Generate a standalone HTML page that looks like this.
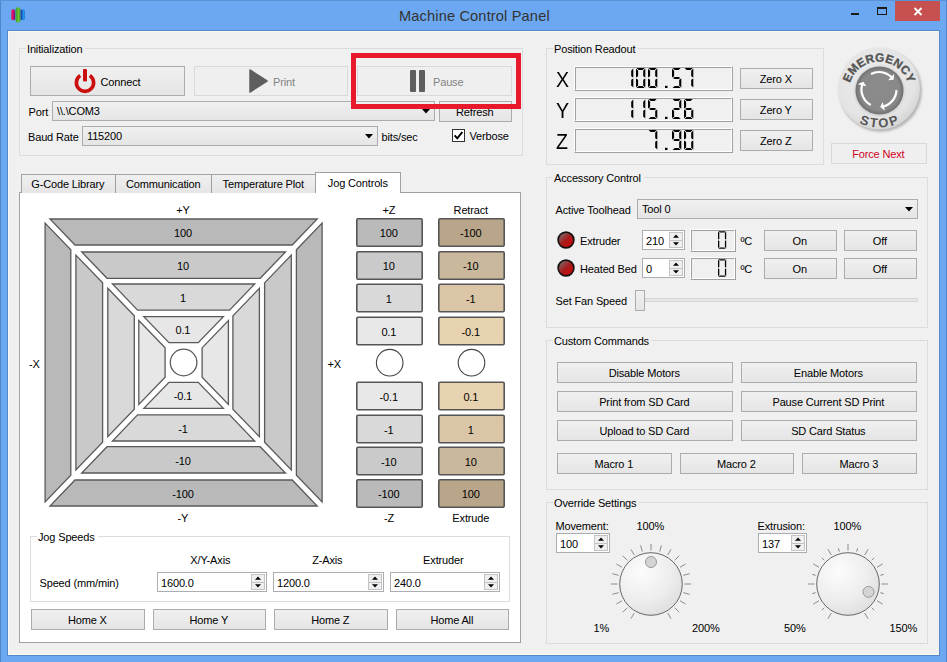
<!DOCTYPE html>
<html><head><meta charset="utf-8"><title>Machine Control Panel</title>
<style>
html,body{margin:0;padding:0;width:947px;height:662px;overflow:hidden;}
body{position:relative;font-family:"Liberation Sans", sans-serif;font-size:11px;letter-spacing:-0.15px;}
</style></head><body>
<div style="position:absolute;left:0;top:0;width:947px;height:662px;background:#6ba8f1;"></div>
<div style="position:absolute;left:0px;top:0px;width:1px;height:662px;background:#4d86c9;"></div>
<div style="position:absolute;left:0px;top:0px;width:947px;height:1px;background:#5a92d6;"></div>
<div style="position:absolute;left:946px;top:0px;width:1px;height:662px;background:#4d86c9;"></div>
<div style="position:absolute;left:7px;top:30px;width:933px;height:626px;border:1px solid #5588c8;box-sizing:border-box;background:#f0f0f0;"></div>
<div style="position:absolute;left:8px;top:31px;width:931px;height:1px;background:#fbf7f2;"></div>
<div style="position:absolute;left:8px;top:31px;width:1px;height:624px;background:#fbf7f2;"></div>
<div style="position:absolute;left:8px;top:654px;width:931px;height:1px;background:#fbf7f2;"></div>
<div style="position:absolute;left:399px;top:8.74px;line-height:14px;font-size:14.6px;color:#333;white-space:nowrap;letter-spacing:0.15px;">Machine Control Panel</div>
<svg style="position:absolute;left:10px;top:6px" width="18" height="19"><defs><linearGradient id="ic1" x1="0" x2="1"><stop offset="0" stop-color="#d0306a"/><stop offset="0.35" stop-color="#e8086a"/><stop offset="1" stop-color="#601888"/></linearGradient><linearGradient id="ic2" x1="0" x2="1"><stop offset="0" stop-color="#2a9a30"/><stop offset="0.6" stop-color="#70c038"/><stop offset="1" stop-color="#2a9a30"/></linearGradient><linearGradient id="ic3" x1="0" x2="1"><stop offset="0" stop-color="#281898"/><stop offset="0.6" stop-color="#1aa0ee"/><stop offset="1" stop-color="#1a70d0"/></linearGradient></defs><rect x="1.2" y="3.3" width="4" height="11" rx="2" fill="url(#ic1)"/><rect x="5.5" y="1.2" width="5" height="15.3" rx="2.5" fill="url(#ic2)"/><rect x="10.8" y="3.3" width="4" height="11" rx="2" fill="url(#ic3)"/></svg>
<div style="position:absolute;left:851px;top:13px;width:8px;height:2px;background:#1a1a1a;"></div>
<div style="position:absolute;left:877px;top:7px;width:10px;height:8px;border:1.5px solid #1a1a1a;border-top-width:2px;box-sizing:border-box;"></div>
<div style="position:absolute;left:895px;top:1px;width:45px;height:20px;background:#c75050;"></div>
<svg style="position:absolute;left:912px;top:6px" width="12" height="11"><path d="M2.5,2 L9.5,9 M9.5,2 L2.5,9" stroke="#fff" stroke-width="1.9"/></svg>
<div style="position:absolute;left:19px;top:48px;width:504px;height:108px;border:1px solid #dcdcdc;box-sizing:border-box;"></div>
<div style="position:absolute;left:30px;top:66px;width:155px;height:30px;border:1px solid #acacac;background:linear-gradient(#f0f0f0,#e5e5e5);box-sizing:border-box;"></div>
<svg style="position:absolute;left:73px;top:68px" width="24" height="26"><path d="M7.2,7.6 A8.6,8.6 0 1 0 16.8,7.6" fill="none" stroke="#cc1010" stroke-width="3.6" stroke-linecap="butt"/><rect x="10" y="1" width="4" height="12.5" rx="1" fill="#cc1010"/></svg>
<div style="position:absolute;left:100.5px;top:75.19px;line-height:14px;font-size:11px;color:#000;white-space:nowrap;">Connect</div>
<div style="position:absolute;left:194px;top:66px;width:154px;height:30px;border:1px solid #d9d9d9;background:#efefef;box-sizing:border-box;"></div>
<svg style="position:absolute;left:249px;top:69px" width="20" height="24"><polygon points="1,1 18,12 1,23" fill="#5e5e5e" stroke="#5e5e5e" stroke-width="1.5" stroke-linejoin="round"/></svg>
<div style="position:absolute;left:273px;top:75.19px;line-height:14px;font-size:11px;color:#838383;white-space:nowrap;">Print</div>
<div style="position:absolute;left:357px;top:66px;width:155px;height:30px;border:1px solid #d9d9d9;background:#efefef;box-sizing:border-box;"></div>
<div style="position:absolute;left:410px;top:70px;width:6px;height:22px;background:#5e5e5e;border-radius:1px;"></div>
<div style="position:absolute;left:419px;top:70px;width:6px;height:22px;background:#5e5e5e;border-radius:1px;"></div>
<div style="position:absolute;left:433px;top:75.19px;line-height:14px;font-size:11px;color:#838383;white-space:nowrap;">Pause</div>
<div style="position:absolute;left:28.5px;top:105.19px;line-height:14px;font-size:11px;color:#000;white-space:nowrap;">Port</div>
<div style="position:absolute;left:52px;top:101px;width:383px;height:20px;border:1px solid #acacac;background:linear-gradient(#f0f0f0,#e5e5e5);box-sizing:border-box;"></div>
<div style="position:absolute;left:57px;top:104.19px;line-height:14px;font-size:11px;color:#000;white-space:nowrap;">\\.\COM3</div>
<svg style="position:absolute;left:422px;top:109.0px" width="8" height="5"><polygon points="0,0 8,0 4,4.5" fill="#000"/></svg>
<div style="position:absolute;left:439px;top:101px;width:73px;height:21px;border:1px solid #acacac;background:linear-gradient(#f0f0f0,#e5e5e5);box-sizing:border-box;"></div>
<div style="position:absolute;left:274.80px;width:400px;text-align:center;top:105.19px;line-height:14px;font-size:11px;color:#000;white-space:nowrap;">Refresh</div>
<div style="position:absolute;left:28px;top:130.19px;line-height:14px;font-size:11px;color:#000;white-space:nowrap;">Baud Rate</div>
<div style="position:absolute;left:82px;top:126px;width:296px;height:20px;border:1px solid #acacac;background:linear-gradient(#f0f0f0,#e5e5e5);box-sizing:border-box;"></div>
<div style="position:absolute;left:87px;top:129.19px;line-height:14px;font-size:11px;color:#000;white-space:nowrap;">115200</div>
<svg style="position:absolute;left:365px;top:134.0px" width="8" height="5"><polygon points="0,0 8,0 4,4.5" fill="#000"/></svg>
<div style="position:absolute;left:381.5px;top:130.19px;line-height:14px;font-size:11px;color:#000;white-space:nowrap;">bits/sec</div>
<div style="position:absolute;left:452px;top:129px;width:13px;height:13px;border:1px solid #333;background:#fff;box-sizing:border-box;"></div>
<svg style="position:absolute;left:452px;top:129px" width="13" height="13"><path d="M2.6,6.3 L5.3,9.3 L10.3,3" fill="none" stroke="#000" stroke-width="2"/></svg>
<div style="position:absolute;left:469.5px;top:129.19px;line-height:14px;font-size:11px;color:#000;white-space:nowrap;">Verbose</div>
<div style="position:absolute;left:546px;top:48px;width:278px;height:117px;border:1px solid #dcdcdc;box-sizing:border-box;"></div>
<div style="position:absolute;left:556px;top:72.92px;line-height:14px;font-size:21.3px;color:#000;white-space:nowrap;transform:scaleX(0.92);transform-origin:0 0;">X</div>
<div style="position:absolute;left:574px;top:66px;width:159px;height:25px;border-top:1px solid #fff;border-left:1px solid #fff;border-bottom:1px solid #a0a0a0;border-right:1px solid #a0a0a0;box-sizing:border-box;"></div>
<div style="position:absolute;left:575px;top:67px;width:157px;height:23px;border-top:1px solid #a0a0a0;border-left:1px solid #a0a0a0;border-bottom:1px solid #fff;border-right:1px solid #fff;box-sizing:border-box;"></div>
<svg style="position:absolute;left:574px;top:66px" width="159" height="25"><g fill="#000"><polygon points="110.60,2.00 118.70,2.00 116.60,4.10 112.70,4.10"/><polygon points="119.30,2.60 119.30,11.40 117.20,10.35 117.20,4.70"/><polygon points="119.30,12.60 119.30,21.40 117.20,19.30 117.20,13.65"/><polygon points="98.60,2.00 106.70,2.00 104.60,4.10 100.70,4.10"/><polygon points="98.00,2.60 100.10,4.70 100.10,10.35 98.00,11.40"/><polygon points="98.90,12.00 100.70,10.95 104.60,10.95 106.40,12.00 104.60,13.05 100.70,13.05"/><polygon points="107.30,12.60 107.30,21.40 105.20,19.30 105.20,13.65"/><polygon points="100.70,19.90 104.60,19.90 106.70,22.00 98.60,22.00"/><rect x="91.00" y="19.80" width="2.5" height="2.2"/><polygon points="74.60,2.00 82.70,2.00 80.60,4.10 76.70,4.10"/><polygon points="83.30,2.60 83.30,11.40 81.20,10.35 81.20,4.70"/><polygon points="83.30,12.60 83.30,21.40 81.20,19.30 81.20,13.65"/><polygon points="76.70,19.90 80.60,19.90 82.70,22.00 74.60,22.00"/><polygon points="74.00,12.60 76.10,13.65 76.10,19.30 74.00,21.40"/><polygon points="74.00,2.60 76.10,4.70 76.10,10.35 74.00,11.40"/><polygon points="62.60,2.00 70.70,2.00 68.60,4.10 64.70,4.10"/><polygon points="71.30,2.60 71.30,11.40 69.20,10.35 69.20,4.70"/><polygon points="71.30,12.60 71.30,21.40 69.20,19.30 69.20,13.65"/><polygon points="64.70,19.90 68.60,19.90 70.70,22.00 62.60,22.00"/><polygon points="62.00,12.60 64.10,13.65 64.10,19.30 62.00,21.40"/><polygon points="62.00,2.60 64.10,4.70 64.10,10.35 62.00,11.40"/><polygon points="59.30,2.60 59.30,11.40 57.20,10.35 57.20,4.70"/><polygon points="59.30,12.60 59.30,21.40 57.20,19.30 57.20,13.65"/></g></svg>
<div style="position:absolute;left:740px;top:68px;width:73px;height:21px;border:1px solid #acacac;background:linear-gradient(#f0f0f0,#e5e5e5);box-sizing:border-box;"></div>
<div style="position:absolute;left:575.80px;width:400px;text-align:center;top:71.69px;line-height:14px;font-size:11px;color:#000;white-space:nowrap;">Zero X</div>
<div style="position:absolute;left:556px;top:103.92px;line-height:14px;font-size:21.3px;color:#000;white-space:nowrap;transform:scaleX(0.92);transform-origin:0 0;">Y</div>
<div style="position:absolute;left:574px;top:97px;width:159px;height:25px;border-top:1px solid #fff;border-left:1px solid #fff;border-bottom:1px solid #a0a0a0;border-right:1px solid #a0a0a0;box-sizing:border-box;"></div>
<div style="position:absolute;left:575px;top:98px;width:157px;height:23px;border-top:1px solid #a0a0a0;border-left:1px solid #a0a0a0;border-bottom:1px solid #fff;border-right:1px solid #fff;box-sizing:border-box;"></div>
<svg style="position:absolute;left:574px;top:97px" width="159" height="25"><g fill="#000"><polygon points="110.60,2.00 118.70,2.00 116.60,4.10 112.70,4.10"/><polygon points="110.00,2.60 112.10,4.70 112.10,10.35 110.00,11.40"/><polygon points="110.90,12.00 112.70,10.95 116.60,10.95 118.40,12.00 116.60,13.05 112.70,13.05"/><polygon points="110.00,12.60 112.10,13.65 112.10,19.30 110.00,21.40"/><polygon points="112.70,19.90 116.60,19.90 118.70,22.00 110.60,22.00"/><polygon points="119.30,12.60 119.30,21.40 117.20,19.30 117.20,13.65"/><polygon points="98.60,2.00 106.70,2.00 104.60,4.10 100.70,4.10"/><polygon points="107.30,2.60 107.30,11.40 105.20,10.35 105.20,4.70"/><polygon points="98.90,12.00 100.70,10.95 104.60,10.95 106.40,12.00 104.60,13.05 100.70,13.05"/><polygon points="98.00,12.60 100.10,13.65 100.10,19.30 98.00,21.40"/><polygon points="100.70,19.90 104.60,19.90 106.70,22.00 98.60,22.00"/><rect x="91.00" y="19.80" width="2.5" height="2.2"/><polygon points="74.60,2.00 82.70,2.00 80.60,4.10 76.70,4.10"/><polygon points="74.00,2.60 76.10,4.70 76.10,10.35 74.00,11.40"/><polygon points="74.90,12.00 76.70,10.95 80.60,10.95 82.40,12.00 80.60,13.05 76.70,13.05"/><polygon points="83.30,12.60 83.30,21.40 81.20,19.30 81.20,13.65"/><polygon points="76.70,19.90 80.60,19.90 82.70,22.00 74.60,22.00"/><polygon points="71.30,2.60 71.30,11.40 69.20,10.35 69.20,4.70"/><polygon points="71.30,12.60 71.30,21.40 69.20,19.30 69.20,13.65"/><polygon points="59.30,2.60 59.30,11.40 57.20,10.35 57.20,4.70"/><polygon points="59.30,12.60 59.30,21.40 57.20,19.30 57.20,13.65"/></g></svg>
<div style="position:absolute;left:740px;top:99px;width:73px;height:21px;border:1px solid #acacac;background:linear-gradient(#f0f0f0,#e5e5e5);box-sizing:border-box;"></div>
<div style="position:absolute;left:575.80px;width:400px;text-align:center;top:102.69px;line-height:14px;font-size:11px;color:#000;white-space:nowrap;">Zero Y</div>
<div style="position:absolute;left:556px;top:134.92px;line-height:14px;font-size:21.3px;color:#000;white-space:nowrap;transform:scaleX(0.92);transform-origin:0 0;">Z</div>
<div style="position:absolute;left:574px;top:128px;width:159px;height:25px;border-top:1px solid #fff;border-left:1px solid #fff;border-bottom:1px solid #a0a0a0;border-right:1px solid #a0a0a0;box-sizing:border-box;"></div>
<div style="position:absolute;left:575px;top:129px;width:157px;height:23px;border-top:1px solid #a0a0a0;border-left:1px solid #a0a0a0;border-bottom:1px solid #fff;border-right:1px solid #fff;box-sizing:border-box;"></div>
<svg style="position:absolute;left:574px;top:128px" width="159" height="25"><g fill="#000"><polygon points="110.60,2.00 118.70,2.00 116.60,4.10 112.70,4.10"/><polygon points="119.30,2.60 119.30,11.40 117.20,10.35 117.20,4.70"/><polygon points="119.30,12.60 119.30,21.40 117.20,19.30 117.20,13.65"/><polygon points="112.70,19.90 116.60,19.90 118.70,22.00 110.60,22.00"/><polygon points="110.00,12.60 112.10,13.65 112.10,19.30 110.00,21.40"/><polygon points="110.00,2.60 112.10,4.70 112.10,10.35 110.00,11.40"/><polygon points="98.60,2.00 106.70,2.00 104.60,4.10 100.70,4.10"/><polygon points="107.30,2.60 107.30,11.40 105.20,10.35 105.20,4.70"/><polygon points="107.30,12.60 107.30,21.40 105.20,19.30 105.20,13.65"/><polygon points="100.70,19.90 104.60,19.90 106.70,22.00 98.60,22.00"/><polygon points="98.00,2.60 100.10,4.70 100.10,10.35 98.00,11.40"/><polygon points="98.90,12.00 100.70,10.95 104.60,10.95 106.40,12.00 104.60,13.05 100.70,13.05"/><rect x="91.00" y="19.80" width="2.5" height="2.2"/><polygon points="74.60,2.00 82.70,2.00 80.60,4.10 76.70,4.10"/><polygon points="83.30,2.60 83.30,11.40 81.20,10.35 81.20,4.70"/><polygon points="83.30,12.60 83.30,21.40 81.20,19.30 81.20,13.65"/></g></svg>
<div style="position:absolute;left:740px;top:130px;width:73px;height:21px;border:1px solid #acacac;background:linear-gradient(#f0f0f0,#e5e5e5);box-sizing:border-box;"></div>
<div style="position:absolute;left:575.80px;width:400px;text-align:center;top:133.69px;line-height:14px;font-size:11px;color:#000;white-space:nowrap;">Zero Z</div>
<svg style="position:absolute;left:830px;top:40px" width="100" height="100" viewBox="830 40 100 100">
<defs>
<radialGradient id="ring" cx="0.45" cy="0.4" r="0.6"><stop offset="0" stop-color="#ececec"/><stop offset="0.8" stop-color="#e4e4e4"/><stop offset="1" stop-color="#d6d6d6"/></radialGradient>
<radialGradient id="btn" cx="0.5" cy="0.5" r="0.5"><stop offset="0" stop-color="#8c8c8c"/><stop offset="0.82" stop-color="#898989"/><stop offset="1" stop-color="#707070"/></radialGradient>
<filter id="sh" x="-20%" y="-20%" width="140%" height="140%"><feGaussianBlur stdDeviation="1.2"/></filter>
<path id="arcTop" d="M 848.7,92 A 30.3,30.3 0 0 1 909.3,92"/>
<path id="arcBot" d="M 833,81.5 A 46,46 0 0 0 925,81.5"/>
</defs>
<circle cx="880.5" cy="90.5" r="41.5" fill="#b8b8b8" filter="url(#sh)"/>
<circle cx="879" cy="88.5" r="41" fill="url(#ring)"/>
<circle cx="879.5" cy="91.0" r="25" fill="#d0d0d0" filter="url(#sh)"/>
<circle cx="879.5" cy="90.5" r="24" fill="url(#btn)"/>
<text font-family="Liberation Sans" font-weight="bold" font-size="11.8" fill="#555" stroke="#555" stroke-width="0.35"><textPath href="#arcTop" startOffset="50%" text-anchor="middle" textLength="77" lengthAdjust="spacing">EMERGENCY</textPath></text>
<text font-family="Liberation Sans" font-weight="bold" font-size="13" fill="#555"><textPath href="#arcBot" startOffset="50%" text-anchor="middle" textLength="41" lengthAdjust="spacing">STOP</textPath></text>
<path d="M 871.06,73.91 A 17.5,17.5 0 0 1 891.59,77.34" fill="none" stroke="#fff" stroke-width="2.2"/><polygon points="893.51,79.71 894.28,73.67 888.03,80.15" fill="#fff"/><path d="M 896.49,90.11 A 17.5,17.5 0 0 1 883.23,106.48" fill="none" stroke="#fff" stroke-width="2.2"/><polygon points="880.22,106.96 885.06,110.65 882.58,102.00" fill="#fff"/><path d="M 870.78,104.95 A 17.5,17.5 0 0 1 862.18,84.68" fill="none" stroke="#fff" stroke-width="2.2"/><polygon points="863.27,81.83 857.65,84.18 866.39,86.36" fill="#fff"/>
</svg>
<div style="position:absolute;left:831px;top:143px;width:96px;height:21px;border:1px solid #d9d9d9;background:#efefef;box-sizing:border-box;"></div>
<div style="position:absolute;left:678.30px;width:400px;text-align:center;top:146.69px;line-height:14px;font-size:11px;color:#d0021b;white-space:nowrap;">Force Next</div>
<div style="position:absolute;left:546px;top:177px;width:382px;height:151px;border:1px solid #dcdcdc;box-sizing:border-box;"></div>
<div style="position:absolute;left:555.5px;top:203.19px;line-height:14px;font-size:11px;color:#000;white-space:nowrap;">Active Toolhead</div>
<div style="position:absolute;left:637px;top:199px;width:281px;height:20px;border:1px solid #acacac;background:linear-gradient(#f0f0f0,#e5e5e5);box-sizing:border-box;"></div>
<div style="position:absolute;left:642px;top:202.19px;line-height:14px;font-size:11px;color:#000;white-space:nowrap;">Tool 0</div>
<svg style="position:absolute;left:905px;top:207.0px" width="8" height="5"><polygon points="0,0 8,0 4,4.5" fill="#000"/></svg>
<svg style="position:absolute;left:555.7px;top:230.0px" width="20" height="20"><defs><linearGradient id="led565.7240" x1="0.15" y1="0.1" x2="0.85" y2="0.9"><stop offset="0" stop-color="#7a6a6a"/><stop offset="0.5" stop-color="#a81c1c"/><stop offset="1" stop-color="#cc0808"/></linearGradient></defs><circle cx="10" cy="10" r="7.9" fill="url(#led565.7240)" stroke="#111" stroke-width="1.6"/></svg>
<div style="position:absolute;left:580px;top:233.69px;line-height:14px;font-size:11px;color:#000;white-space:nowrap;">Extruder</div>
<div style="position:absolute;left:642px;top:230px;width:43px;height:20px;border:1px solid #abadb3;background:#fff;box-sizing:border-box;"></div>
<div style="position:absolute;left:646px;top:233.99px;line-height:14px;font-size:11px;color:#000;white-space:nowrap;">210</div>
<div style="position:absolute;left:669px;top:232px;width:14px;height:16px;border:1px solid #c4c4c4;background:#efefef;box-sizing:border-box;"></div>
<div style="position:absolute;left:670px;top:239.5px;width:12px;height:1px;background:#c4c4c4;"></div>
<svg style="position:absolute;left:669px;top:232px" width="14" height="16"><polygon points="4.0,5.8 10.0,5.8 7.0,2.5999999999999996" fill="#000"/><polygon points="4.0,10.2 10.0,10.2 7.0,13.4" fill="#000"/></svg>
<div style="position:absolute;left:690px;top:229.0px;width:46px;height:23px;border-top:1px solid #fff;border-left:1px solid #fff;border-bottom:1px solid #a0a0a0;border-right:1px solid #a0a0a0;box-sizing:border-box;"></div>
<div style="position:absolute;left:691px;top:230.0px;width:44px;height:21px;border-top:1px solid #a0a0a0;border-left:1px solid #a0a0a0;border-bottom:1px solid #fff;border-right:1px solid #fff;box-sizing:border-box;"></div>
<svg style="position:absolute;left:690px;top:229.0px" width="46" height="23"><g fill="#000"><polygon points="28.40,2.20 35.80,2.20 34.50,3.50 29.70,3.50"/><polygon points="36.20,2.60 36.20,10.55 34.90,9.90 34.90,3.90"/><polygon points="36.20,11.35 36.20,19.30 34.90,18.00 34.90,12.00"/><polygon points="29.70,18.40 34.50,18.40 35.80,19.70 28.40,19.70"/><polygon points="28.00,11.35 29.30,12.00 29.30,18.00 28.00,19.30"/><polygon points="28.00,2.60 29.30,3.90 29.30,9.90 28.00,10.55"/></g></svg>
<div style="position:absolute;left:740.5px;top:233.69px;line-height:14px;font-size:11px;color:#000;white-space:nowrap;">&ordm;C</div>
<div style="position:absolute;left:764px;top:230px;width:73px;height:21px;border:1px solid #acacac;background:linear-gradient(#f0f0f0,#e5e5e5);box-sizing:border-box;"></div>
<div style="position:absolute;left:599.80px;width:400px;text-align:center;top:233.69px;line-height:14px;font-size:11px;color:#000;white-space:nowrap;">On</div>
<div style="position:absolute;left:844px;top:230px;width:73px;height:21px;border:1px solid #acacac;background:linear-gradient(#f0f0f0,#e5e5e5);box-sizing:border-box;"></div>
<div style="position:absolute;left:679.80px;width:400px;text-align:center;top:233.69px;line-height:14px;font-size:11px;color:#000;white-space:nowrap;">Off</div>
<svg style="position:absolute;left:555.7px;top:258.0px" width="20" height="20"><defs><linearGradient id="led565.7268" x1="0.15" y1="0.1" x2="0.85" y2="0.9"><stop offset="0" stop-color="#7a6a6a"/><stop offset="0.5" stop-color="#a81c1c"/><stop offset="1" stop-color="#cc0808"/></linearGradient></defs><circle cx="10" cy="10" r="7.9" fill="url(#led565.7268)" stroke="#111" stroke-width="1.6"/></svg>
<div style="position:absolute;left:580px;top:261.69px;line-height:14px;font-size:11px;color:#000;white-space:nowrap;">Heated Bed</div>
<div style="position:absolute;left:642px;top:258px;width:43px;height:20px;border:1px solid #abadb3;background:#fff;box-sizing:border-box;"></div>
<div style="position:absolute;left:646px;top:261.99px;line-height:14px;font-size:11px;color:#000;white-space:nowrap;">0</div>
<div style="position:absolute;left:669px;top:260px;width:14px;height:16px;border:1px solid #c4c4c4;background:#efefef;box-sizing:border-box;"></div>
<div style="position:absolute;left:670px;top:267.5px;width:12px;height:1px;background:#c4c4c4;"></div>
<svg style="position:absolute;left:669px;top:260px" width="14" height="16"><polygon points="4.0,5.8 10.0,5.8 7.0,2.5999999999999996" fill="#000"/><polygon points="4.0,10.2 10.0,10.2 7.0,13.4" fill="#000"/></svg>
<div style="position:absolute;left:690px;top:257.0px;width:46px;height:23px;border-top:1px solid #fff;border-left:1px solid #fff;border-bottom:1px solid #a0a0a0;border-right:1px solid #a0a0a0;box-sizing:border-box;"></div>
<div style="position:absolute;left:691px;top:258.0px;width:44px;height:21px;border-top:1px solid #a0a0a0;border-left:1px solid #a0a0a0;border-bottom:1px solid #fff;border-right:1px solid #fff;box-sizing:border-box;"></div>
<svg style="position:absolute;left:690px;top:257.0px" width="46" height="23"><g fill="#000"><polygon points="28.40,2.20 35.80,2.20 34.50,3.50 29.70,3.50"/><polygon points="36.20,2.60 36.20,10.55 34.90,9.90 34.90,3.90"/><polygon points="36.20,11.35 36.20,19.30 34.90,18.00 34.90,12.00"/><polygon points="29.70,18.40 34.50,18.40 35.80,19.70 28.40,19.70"/><polygon points="28.00,11.35 29.30,12.00 29.30,18.00 28.00,19.30"/><polygon points="28.00,2.60 29.30,3.90 29.30,9.90 28.00,10.55"/></g></svg>
<div style="position:absolute;left:740.5px;top:261.69px;line-height:14px;font-size:11px;color:#000;white-space:nowrap;">&ordm;C</div>
<div style="position:absolute;left:764px;top:258px;width:73px;height:21px;border:1px solid #acacac;background:linear-gradient(#f0f0f0,#e5e5e5);box-sizing:border-box;"></div>
<div style="position:absolute;left:599.80px;width:400px;text-align:center;top:261.69px;line-height:14px;font-size:11px;color:#000;white-space:nowrap;">On</div>
<div style="position:absolute;left:844px;top:258px;width:73px;height:21px;border:1px solid #acacac;background:linear-gradient(#f0f0f0,#e5e5e5);box-sizing:border-box;"></div>
<div style="position:absolute;left:679.80px;width:400px;text-align:center;top:261.69px;line-height:14px;font-size:11px;color:#000;white-space:nowrap;">Off</div>
<div style="position:absolute;left:555.5px;top:294.19px;line-height:14px;font-size:11px;color:#000;white-space:nowrap;">Set Fan Speed</div>
<div style="position:absolute;left:645px;top:298px;width:273px;height:4px;border:1px solid #d6d6d6;background:#e7e7e7;box-sizing:border-box;"></div>
<div style="position:absolute;left:635px;top:290px;width:10px;height:21px;border:1px solid #acacac;background:linear-gradient(#f0f0f0,#e5e5e5);box-sizing:border-box;"></div>
<div style="position:absolute;left:546px;top:340px;width:382px;height:150px;border:1px solid #dcdcdc;box-sizing:border-box;"></div>
<div style="position:absolute;left:557px;top:362px;width:176px;height:21px;border:1px solid #acacac;background:linear-gradient(#f0f0f0,#e5e5e5);box-sizing:border-box;"></div>
<div style="position:absolute;left:444.30px;width:400px;text-align:center;top:365.69px;line-height:14px;font-size:11px;color:#000;white-space:nowrap;">Disable Motors</div>
<div style="position:absolute;left:741px;top:362px;width:176px;height:21px;border:1px solid #acacac;background:linear-gradient(#f0f0f0,#e5e5e5);box-sizing:border-box;"></div>
<div style="position:absolute;left:628.30px;width:400px;text-align:center;top:365.69px;line-height:14px;font-size:11px;color:#000;white-space:nowrap;">Enable Motors</div>
<div style="position:absolute;left:557px;top:391px;width:176px;height:21px;border:1px solid #acacac;background:linear-gradient(#f0f0f0,#e5e5e5);box-sizing:border-box;"></div>
<div style="position:absolute;left:444.30px;width:400px;text-align:center;top:394.69px;line-height:14px;font-size:11px;color:#000;white-space:nowrap;">Print from SD Card</div>
<div style="position:absolute;left:741px;top:391px;width:176px;height:21px;border:1px solid #acacac;background:linear-gradient(#f0f0f0,#e5e5e5);box-sizing:border-box;"></div>
<div style="position:absolute;left:628.30px;width:400px;text-align:center;top:394.69px;line-height:14px;font-size:11px;color:#000;white-space:nowrap;">Pause Current SD Print</div>
<div style="position:absolute;left:557px;top:420px;width:176px;height:21px;border:1px solid #acacac;background:linear-gradient(#f0f0f0,#e5e5e5);box-sizing:border-box;"></div>
<div style="position:absolute;left:444.30px;width:400px;text-align:center;top:423.69px;line-height:14px;font-size:11px;color:#000;white-space:nowrap;">Upload to SD Card</div>
<div style="position:absolute;left:741px;top:420px;width:176px;height:21px;border:1px solid #acacac;background:linear-gradient(#f0f0f0,#e5e5e5);box-sizing:border-box;"></div>
<div style="position:absolute;left:628.30px;width:400px;text-align:center;top:423.69px;line-height:14px;font-size:11px;color:#000;white-space:nowrap;">SD Card Status</div>
<div style="position:absolute;left:557px;top:453px;width:115px;height:21px;border:1px solid #acacac;background:linear-gradient(#f0f0f0,#e5e5e5);box-sizing:border-box;"></div>
<div style="position:absolute;left:413.80px;width:400px;text-align:center;top:456.69px;line-height:14px;font-size:11px;color:#000;white-space:nowrap;">Macro 1</div>
<div style="position:absolute;left:680px;top:453px;width:114px;height:21px;border:1px solid #acacac;background:linear-gradient(#f0f0f0,#e5e5e5);box-sizing:border-box;"></div>
<div style="position:absolute;left:536.30px;width:400px;text-align:center;top:456.69px;line-height:14px;font-size:11px;color:#000;white-space:nowrap;">Macro 2</div>
<div style="position:absolute;left:802px;top:453px;width:115px;height:21px;border:1px solid #acacac;background:linear-gradient(#f0f0f0,#e5e5e5);box-sizing:border-box;"></div>
<div style="position:absolute;left:658.80px;width:400px;text-align:center;top:456.69px;line-height:14px;font-size:11px;color:#000;white-space:nowrap;">Macro 3</div>
<div style="position:absolute;left:546px;top:502px;width:382px;height:142px;border:1px solid #dcdcdc;box-sizing:border-box;"></div>
<div style="position:absolute;left:555.5px;top:519.19px;line-height:14px;font-size:11px;color:#000;white-space:nowrap;">Movement:</div>
<div style="position:absolute;left:636.5px;top:519.19px;line-height:14px;font-size:11px;color:#000;white-space:nowrap;">100%</div>
<div style="position:absolute;left:556px;top:533px;width:54px;height:20px;border:1px solid #abadb3;background:#fff;box-sizing:border-box;"></div>
<div style="position:absolute;left:560px;top:536.99px;line-height:14px;font-size:11px;color:#000;white-space:nowrap;">100</div>
<div style="position:absolute;left:594px;top:535px;width:14px;height:16px;border:1px solid #c4c4c4;background:#efefef;box-sizing:border-box;"></div>
<div style="position:absolute;left:595px;top:542.5px;width:12px;height:1px;background:#c4c4c4;"></div>
<svg style="position:absolute;left:594px;top:535px" width="14" height="16"><polygon points="4.0,5.8 10.0,5.8 7.0,2.5999999999999996" fill="#000"/><polygon points="4.0,10.2 10.0,10.2 7.0,13.4" fill="#000"/></svg>
<svg style="position:absolute;left:606.2px;top:539px" width="90" height="90" viewBox="606.2 539 90 90">
<defs><radialGradient id="k651" cx="0.35" cy="0.3" r="0.8"><stop offset="0" stop-color="#fcfcfc"/><stop offset="0.6" stop-color="#ededed"/><stop offset="1" stop-color="#dcdcdc"/></radialGradient></defs>
<g stroke="#858585" stroke-width="0.95"><line x1="634.45" y1="613.01" x2="631.20" y2="618.64"/><line x1="627.51" y1="607.69" x2="622.92" y2="612.28"/><line x1="622.19" y1="600.75" x2="616.56" y2="604.00"/><line x1="618.84" y1="592.67" x2="612.56" y2="594.35"/><line x1="617.70" y1="584.00" x2="611.20" y2="584.00"/><line x1="618.84" y1="575.33" x2="612.56" y2="573.65"/><line x1="622.19" y1="567.25" x2="616.56" y2="564.00"/><line x1="627.51" y1="560.31" x2="622.92" y2="555.72"/><line x1="634.45" y1="554.99" x2="631.20" y2="549.36"/><line x1="642.53" y1="551.64" x2="640.85" y2="545.36"/><line x1="651.20" y1="550.50" x2="651.20" y2="544.00"/><line x1="659.87" y1="551.64" x2="661.55" y2="545.36"/><line x1="667.95" y1="554.99" x2="671.20" y2="549.36"/><line x1="674.89" y1="560.31" x2="679.48" y2="555.72"/><line x1="680.21" y1="567.25" x2="685.84" y2="564.00"/><line x1="683.56" y1="575.33" x2="689.84" y2="573.65"/><line x1="684.70" y1="584.00" x2="691.20" y2="584.00"/><line x1="683.56" y1="592.67" x2="689.84" y2="594.35"/><line x1="680.21" y1="600.75" x2="685.84" y2="604.00"/><line x1="674.89" y1="607.69" x2="679.48" y2="612.28"/><line x1="667.95" y1="613.01" x2="671.20" y2="618.64"/></g>
<circle cx="651.2" cy="584" r="31.3" fill="url(#k651)" stroke="#606060" stroke-width="0.95"/>
<circle cx="651.20" cy="562.00" r="5.5" fill="#d4d4d4" stroke="#999" stroke-width="1"/>
</svg>
<div style="position:absolute;left:593.5px;top:621.19px;line-height:14px;font-size:11px;color:#000;white-space:nowrap;">1%</div>
<div style="position:absolute;left:692px;top:621.19px;line-height:14px;font-size:11px;color:#000;white-space:nowrap;">200%</div>
<div style="position:absolute;left:757.5px;top:519.19px;line-height:14px;font-size:11px;color:#000;white-space:nowrap;">Extrusion:</div>
<div style="position:absolute;left:833.5px;top:519.19px;line-height:14px;font-size:11px;color:#000;white-space:nowrap;">100%</div>
<div style="position:absolute;left:758px;top:533px;width:49px;height:20px;border:1px solid #abadb3;background:#fff;box-sizing:border-box;"></div>
<div style="position:absolute;left:762px;top:536.99px;line-height:14px;font-size:11px;color:#000;white-space:nowrap;">137</div>
<div style="position:absolute;left:791px;top:535px;width:14px;height:16px;border:1px solid #c4c4c4;background:#efefef;box-sizing:border-box;"></div>
<div style="position:absolute;left:792px;top:542.5px;width:12px;height:1px;background:#c4c4c4;"></div>
<svg style="position:absolute;left:791px;top:535px" width="14" height="16"><polygon points="4.0,5.8 10.0,5.8 7.0,2.5999999999999996" fill="#000"/><polygon points="4.0,10.2 10.0,10.2 7.0,13.4" fill="#000"/></svg>
<svg style="position:absolute;left:803px;top:539px" width="90" height="90" viewBox="803 539 90 90">
<defs><radialGradient id="k848" cx="0.35" cy="0.3" r="0.8"><stop offset="0" stop-color="#fcfcfc"/><stop offset="0.6" stop-color="#ededed"/><stop offset="1" stop-color="#dcdcdc"/></radialGradient></defs>
<g stroke="#858585" stroke-width="0.95"><line x1="831.25" y1="613.01" x2="828.00" y2="618.64"/><line x1="824.31" y1="607.69" x2="821.84" y2="610.16"/><line x1="818.99" y1="600.75" x2="813.36" y2="604.00"/><line x1="815.64" y1="592.67" x2="812.26" y2="593.58"/><line x1="814.50" y1="584.00" x2="808.00" y2="584.00"/><line x1="815.64" y1="575.33" x2="812.26" y2="574.42"/><line x1="818.99" y1="567.25" x2="813.36" y2="564.00"/><line x1="824.31" y1="560.31" x2="821.84" y2="557.84"/><line x1="831.25" y1="554.99" x2="828.00" y2="549.36"/><line x1="839.33" y1="551.64" x2="838.42" y2="548.26"/><line x1="848.00" y1="550.50" x2="848.00" y2="544.00"/><line x1="856.67" y1="551.64" x2="857.58" y2="548.26"/><line x1="864.75" y1="554.99" x2="868.00" y2="549.36"/><line x1="871.69" y1="560.31" x2="874.16" y2="557.84"/><line x1="877.01" y1="567.25" x2="882.64" y2="564.00"/><line x1="880.36" y1="575.33" x2="883.74" y2="574.42"/><line x1="881.50" y1="584.00" x2="888.00" y2="584.00"/><line x1="880.36" y1="592.67" x2="883.74" y2="593.58"/><line x1="877.01" y1="600.75" x2="882.64" y2="604.00"/><line x1="871.69" y1="607.69" x2="874.16" y2="610.16"/><line x1="864.75" y1="613.01" x2="868.00" y2="618.64"/></g>
<circle cx="848" cy="584" r="31.3" fill="url(#k848)" stroke="#606060" stroke-width="0.95"/>
<circle cx="868.54" cy="591.88" r="5.5" fill="#d4d4d4" stroke="#999" stroke-width="1"/>
</svg>
<div style="position:absolute;left:784px;top:621.19px;line-height:14px;font-size:11px;color:#000;white-space:nowrap;">50%</div>
<div style="position:absolute;left:889.5px;top:621.19px;line-height:14px;font-size:11px;color:#000;white-space:nowrap;">150%</div>
<div style="position:absolute;left:19px;top:192px;width:502px;height:451px;border:1px solid #a0a0a0;background:#fff;box-sizing:border-box;"></div>
<div style="position:absolute;left:21px;top:174px;width:95px;height:19px;border:1px solid #a0a0a0;border-bottom:none;background:linear-gradient(#f0f0f0,#e5e5e5);box-sizing:border-box;"></div>
<div style="position:absolute;left:-132.20px;width:400px;text-align:center;top:177.19px;line-height:14px;font-size:11px;color:#000;white-space:nowrap;">G-Code Library</div>
<div style="position:absolute;left:115px;top:174px;width:98px;height:19px;border:1px solid #a0a0a0;border-bottom:none;background:linear-gradient(#f0f0f0,#e5e5e5);box-sizing:border-box;"></div>
<div style="position:absolute;left:-36.70px;width:400px;text-align:center;top:177.19px;line-height:14px;font-size:11px;color:#000;white-space:nowrap;">Communication</div>
<div style="position:absolute;left:211px;top:174px;width:106px;height:19px;border:1px solid #a0a0a0;border-bottom:none;background:linear-gradient(#f0f0f0,#e5e5e5);box-sizing:border-box;"></div>
<svg style="position:absolute;left:0;top:0" width="947" height="662"><g stroke="#555" stroke-width="1.6"><rect x="356.8" y="218.8" width="65.4" height="27.4" rx="1.2" fill="#bababa"/><rect x="438.8" y="218.8" width="65.4" height="27.4" rx="1.2" fill="#b9a68a"/><rect x="356.8" y="479.8" width="65.4" height="27.4" rx="1.2" fill="#bababa"/><rect x="438.8" y="479.8" width="65.4" height="27.4" rx="1.2" fill="#b9a68a"/><rect x="356.8" y="251.8" width="65.4" height="27.4" rx="1.2" fill="#cacaca"/><rect x="438.8" y="251.8" width="65.4" height="27.4" rx="1.2" fill="#cab89c"/><rect x="356.8" y="447.3" width="65.4" height="27.4" rx="1.2" fill="#cacaca"/><rect x="438.8" y="447.3" width="65.4" height="27.4" rx="1.2" fill="#cab89c"/><rect x="356.8" y="284.3" width="65.4" height="27.4" rx="1.2" fill="#d9d9d9"/><rect x="438.8" y="284.3" width="65.4" height="27.4" rx="1.2" fill="#dac6a6"/><rect x="356.8" y="415.3" width="65.4" height="27.4" rx="1.2" fill="#d9d9d9"/><rect x="438.8" y="415.3" width="65.4" height="27.4" rx="1.2" fill="#dac6a6"/><rect x="356.8" y="317.3" width="65.4" height="27.4" rx="1.2" fill="#e8e8e8"/><rect x="438.8" y="317.3" width="65.4" height="27.4" rx="1.2" fill="#e8d3b0"/><rect x="356.8" y="382.3" width="65.4" height="27.4" rx="1.2" fill="#e8e8e8"/><rect x="438.8" y="382.3" width="65.4" height="27.4" rx="1.2" fill="#e8d3b0"/></g></svg>
<div style="position:absolute;left:63.30px;width:400px;text-align:center;top:177.19px;line-height:14px;font-size:11px;color:#000;white-space:nowrap;">Temperature Plot</div>
<div style="position:absolute;left:315px;top:172px;width:86px;height:21px;border:1px solid #a0a0a0;border-bottom:none;background:#fff;box-sizing:border-box;"></div>
<div style="position:absolute;left:157.80px;width:400px;text-align:center;top:176.19px;line-height:14px;font-size:11px;color:#000;white-space:nowrap;">Jog Controls</div>
<svg style="position:absolute;left:0;top:0" width="947" height="662"><g stroke="#5a5a5a" stroke-width="1.3" stroke-linejoin="miter"><polygon points="49.98,219.00 317.22,219.00 292.21,245.00 74.99,245.00" fill="#b9b9b9"/><polygon points="74.99,480.00 292.21,480.00 317.22,506.00 49.98,506.00" fill="#b9b9b9"/><polygon points="45.10,223.10 70.80,249.82 70.80,475.18 45.10,501.90" fill="#b9b9b9"/><polygon points="296.40,249.82 322.10,223.10 322.10,501.90 296.40,475.18" fill="#b9b9b9"/><polygon points="81.72,252.00 285.48,252.00 260.18,278.30 107.02,278.30" fill="#c9c9c9"/><polygon points="107.02,446.70 260.18,446.70 285.48,473.00 81.72,473.00" fill="#c9c9c9"/><polygon points="75.90,255.12 102.60,282.88 102.60,442.12 75.90,469.88" fill="#c9c9c9"/><polygon points="264.60,282.88 291.30,255.12 291.30,469.88 264.60,442.12" fill="#c9c9c9"/><polygon points="112.50,284.00 254.70,284.00 229.60,310.10 137.60,310.10" fill="#d9d9d9"/><polygon points="137.60,414.90 229.60,414.90 254.70,441.00 112.50,441.00" fill="#d9d9d9"/><polygon points="107.80,288.29 134.30,315.84 134.30,409.16 107.80,436.71" fill="#d9d9d9"/><polygon points="232.90,315.84 259.40,288.29 259.40,436.71 232.90,409.16" fill="#d9d9d9"/><polygon points="143.85,316.60 223.35,316.60 198.24,342.70 168.96,342.70" fill="#e7e7e7"/><polygon points="168.96,382.30 198.24,382.30 223.35,408.40 143.85,408.40" fill="#e7e7e7"/><polygon points="138.80,320.52 165.10,347.87 165.10,377.13 138.80,404.48" fill="#e7e7e7"/><polygon points="202.10,347.87 228.40,320.52 228.40,404.48 202.10,377.13" fill="#e7e7e7"/><circle cx="183.6" cy="362.5" r="13.3" fill="#fff"/></g></svg>
<div style="position:absolute;left:-17.10px;width:400px;text-align:center;top:225.79px;line-height:14px;font-size:11px;color:#000;white-space:nowrap;">100</div>
<div style="position:absolute;left:-17.10px;width:400px;text-align:center;top:486.79px;line-height:14px;font-size:11px;color:#000;white-space:nowrap;">-100</div>
<div style="position:absolute;left:-17.10px;width:400px;text-align:center;top:258.94px;line-height:14px;font-size:11px;color:#000;white-space:nowrap;">10</div>
<div style="position:absolute;left:-17.10px;width:400px;text-align:center;top:453.64px;line-height:14px;font-size:11px;color:#000;white-space:nowrap;">-10</div>
<div style="position:absolute;left:-17.10px;width:400px;text-align:center;top:290.84px;line-height:14px;font-size:11px;color:#000;white-space:nowrap;">1</div>
<div style="position:absolute;left:-17.10px;width:400px;text-align:center;top:421.74px;line-height:14px;font-size:11px;color:#000;white-space:nowrap;">-1</div>
<div style="position:absolute;left:-17.10px;width:400px;text-align:center;top:323.44px;line-height:14px;font-size:11px;color:#000;white-space:nowrap;">0.1</div>
<div style="position:absolute;left:-17.10px;width:400px;text-align:center;top:389.14px;line-height:14px;font-size:11px;color:#000;white-space:nowrap;">-0.1</div>
<div style="position:absolute;left:-17.10px;width:400px;text-align:center;top:203.19px;line-height:14px;font-size:11px;color:#000;white-space:nowrap;">+Y</div>
<div style="position:absolute;left:-17.10px;width:400px;text-align:center;top:511.19px;line-height:14px;font-size:11px;color:#000;white-space:nowrap;">-Y</div>
<div style="position:absolute;left:-165.70px;width:400px;text-align:center;top:357.19px;line-height:14px;font-size:11px;color:#000;white-space:nowrap;">-X</div>
<div style="position:absolute;left:134.30px;width:400px;text-align:center;top:357.19px;line-height:14px;font-size:11px;color:#000;white-space:nowrap;">+X</div>
<div style="position:absolute;left:188.80px;width:400px;text-align:center;top:226.19px;line-height:14px;font-size:11px;color:#000;white-space:nowrap;">100</div>
<div style="position:absolute;left:270.80px;width:400px;text-align:center;top:226.19px;line-height:14px;font-size:11px;color:#000;white-space:nowrap;">-100</div>
<div style="position:absolute;left:188.80px;width:400px;text-align:center;top:487.19px;line-height:14px;font-size:11px;color:#000;white-space:nowrap;">-100</div>
<div style="position:absolute;left:270.80px;width:400px;text-align:center;top:487.19px;line-height:14px;font-size:11px;color:#000;white-space:nowrap;">100</div>
<div style="position:absolute;left:188.80px;width:400px;text-align:center;top:259.19px;line-height:14px;font-size:11px;color:#000;white-space:nowrap;">10</div>
<div style="position:absolute;left:270.80px;width:400px;text-align:center;top:259.19px;line-height:14px;font-size:11px;color:#000;white-space:nowrap;">-10</div>
<div style="position:absolute;left:188.80px;width:400px;text-align:center;top:454.69px;line-height:14px;font-size:11px;color:#000;white-space:nowrap;">-10</div>
<div style="position:absolute;left:270.80px;width:400px;text-align:center;top:454.69px;line-height:14px;font-size:11px;color:#000;white-space:nowrap;">10</div>
<div style="position:absolute;left:188.80px;width:400px;text-align:center;top:291.69px;line-height:14px;font-size:11px;color:#000;white-space:nowrap;">1</div>
<div style="position:absolute;left:270.80px;width:400px;text-align:center;top:291.69px;line-height:14px;font-size:11px;color:#000;white-space:nowrap;">-1</div>
<div style="position:absolute;left:188.80px;width:400px;text-align:center;top:422.69px;line-height:14px;font-size:11px;color:#000;white-space:nowrap;">-1</div>
<div style="position:absolute;left:270.80px;width:400px;text-align:center;top:422.69px;line-height:14px;font-size:11px;color:#000;white-space:nowrap;">1</div>
<div style="position:absolute;left:188.80px;width:400px;text-align:center;top:324.69px;line-height:14px;font-size:11px;color:#000;white-space:nowrap;">0.1</div>
<div style="position:absolute;left:270.80px;width:400px;text-align:center;top:324.69px;line-height:14px;font-size:11px;color:#000;white-space:nowrap;">-0.1</div>
<div style="position:absolute;left:188.80px;width:400px;text-align:center;top:389.69px;line-height:14px;font-size:11px;color:#000;white-space:nowrap;">-0.1</div>
<div style="position:absolute;left:270.80px;width:400px;text-align:center;top:389.69px;line-height:14px;font-size:11px;color:#000;white-space:nowrap;">0.1</div>
<svg style="position:absolute;left:0;top:0" width="947" height="662"><g fill="#fff" stroke="#444" stroke-width="1.1"><circle cx="389.7" cy="362.7" r="13.3"/><circle cx="471.5" cy="362.7" r="13.3"/></g></svg>
<div style="position:absolute;left:189.00px;width:400px;text-align:center;top:203.19px;line-height:14px;font-size:11px;color:#000;white-space:nowrap;">+Z</div>
<div style="position:absolute;left:270.80px;width:400px;text-align:center;top:203.19px;line-height:14px;font-size:11px;color:#000;white-space:nowrap;">Retract</div>
<div style="position:absolute;left:189.00px;width:400px;text-align:center;top:511.19px;line-height:14px;font-size:11px;color:#000;white-space:nowrap;">-Z</div>
<div style="position:absolute;left:270.80px;width:400px;text-align:center;top:511.19px;line-height:14px;font-size:11px;color:#000;white-space:nowrap;">Extrude</div>
<div style="position:absolute;left:30px;top:536px;width:480px;height:66px;border:1px solid #dcdcdc;box-sizing:border-box;"></div>
<div style="position:absolute;left:10.30px;width:400px;text-align:center;top:553.19px;line-height:14px;font-size:11px;color:#000;white-space:nowrap;">X/Y-Axis</div>
<div style="position:absolute;left:127.30px;width:400px;text-align:center;top:553.19px;line-height:14px;font-size:11px;color:#000;white-space:nowrap;">Z-Axis</div>
<div style="position:absolute;left:243.30px;width:400px;text-align:center;top:553.19px;line-height:14px;font-size:11px;color:#000;white-space:nowrap;">Extruder</div>
<div style="position:absolute;left:39.5px;top:576.19px;line-height:14px;font-size:11px;color:#000;white-space:nowrap;">Speed (mm/min)</div>
<div style="position:absolute;left:157px;top:572px;width:110px;height:20px;border:1px solid #abadb3;background:#fff;box-sizing:border-box;"></div>
<div style="position:absolute;left:161px;top:575.99px;line-height:14px;font-size:11px;color:#000;white-space:nowrap;">1600.0</div>
<div style="position:absolute;left:251px;top:574px;width:14px;height:16px;border:1px solid #c4c4c4;background:#efefef;box-sizing:border-box;"></div>
<div style="position:absolute;left:252px;top:581.5px;width:12px;height:1px;background:#c4c4c4;"></div>
<svg style="position:absolute;left:251px;top:574px" width="14" height="16"><polygon points="4.0,5.8 10.0,5.8 7.0,2.5999999999999996" fill="#000"/><polygon points="4.0,10.2 10.0,10.2 7.0,13.4" fill="#000"/></svg>
<div style="position:absolute;left:273px;top:572px;width:111px;height:20px;border:1px solid #abadb3;background:#fff;box-sizing:border-box;"></div>
<div style="position:absolute;left:277px;top:575.99px;line-height:14px;font-size:11px;color:#000;white-space:nowrap;">1200.0</div>
<div style="position:absolute;left:368px;top:574px;width:14px;height:16px;border:1px solid #c4c4c4;background:#efefef;box-sizing:border-box;"></div>
<div style="position:absolute;left:369px;top:581.5px;width:12px;height:1px;background:#c4c4c4;"></div>
<svg style="position:absolute;left:368px;top:574px" width="14" height="16"><polygon points="4.0,5.8 10.0,5.8 7.0,2.5999999999999996" fill="#000"/><polygon points="4.0,10.2 10.0,10.2 7.0,13.4" fill="#000"/></svg>
<div style="position:absolute;left:390px;top:572px;width:110px;height:20px;border:1px solid #abadb3;background:#fff;box-sizing:border-box;"></div>
<div style="position:absolute;left:394px;top:575.99px;line-height:14px;font-size:11px;color:#000;white-space:nowrap;">240.0</div>
<div style="position:absolute;left:484px;top:574px;width:14px;height:16px;border:1px solid #c4c4c4;background:#efefef;box-sizing:border-box;"></div>
<div style="position:absolute;left:485px;top:581.5px;width:12px;height:1px;background:#c4c4c4;"></div>
<svg style="position:absolute;left:484px;top:574px" width="14" height="16"><polygon points="4.0,5.8 10.0,5.8 7.0,2.5999999999999996" fill="#000"/><polygon points="4.0,10.2 10.0,10.2 7.0,13.4" fill="#000"/></svg>
<div style="position:absolute;left:31px;top:609px;width:114px;height:21px;border:1px solid #acacac;background:linear-gradient(#f0f0f0,#e5e5e5);box-sizing:border-box;"></div>
<div style="position:absolute;left:-112.70px;width:400px;text-align:center;top:612.69px;line-height:14px;font-size:11px;color:#000;white-space:nowrap;">Home X</div>
<div style="position:absolute;left:153px;top:609px;width:113px;height:21px;border:1px solid #acacac;background:linear-gradient(#f0f0f0,#e5e5e5);box-sizing:border-box;"></div>
<div style="position:absolute;left:8.80px;width:400px;text-align:center;top:612.69px;line-height:14px;font-size:11px;color:#000;white-space:nowrap;">Home Y</div>
<div style="position:absolute;left:274px;top:609px;width:114px;height:21px;border:1px solid #acacac;background:linear-gradient(#f0f0f0,#e5e5e5);box-sizing:border-box;"></div>
<div style="position:absolute;left:130.30px;width:400px;text-align:center;top:612.69px;line-height:14px;font-size:11px;color:#000;white-space:nowrap;">Home Z</div>
<div style="position:absolute;left:396px;top:609px;width:113px;height:21px;border:1px solid #acacac;background:linear-gradient(#f0f0f0,#e5e5e5);box-sizing:border-box;"></div>
<div style="position:absolute;left:251.80px;width:400px;text-align:center;top:612.69px;line-height:14px;font-size:11px;color:#000;white-space:nowrap;">Home All</div>
<div style="position:absolute;left:26px;top:41px;height:14px;padding:0 3px 0 1px;background:#f0f0f0;line-height:14px;font-size:11px;color:#000;white-space:nowrap;"><span style="position:relative;top:0.9px">Initialization</span></div>
<div style="position:absolute;left:553px;top:41px;height:14px;padding:0 3px 0 1px;background:#f0f0f0;line-height:14px;font-size:11px;color:#000;white-space:nowrap;"><span style="position:relative;top:0.9px">Position Readout</span></div>
<div style="position:absolute;left:553px;top:170px;height:14px;padding:0 3px 0 1px;background:#f0f0f0;line-height:14px;font-size:11px;color:#000;white-space:nowrap;"><span style="position:relative;top:0.9px">Accessory Control</span></div>
<div style="position:absolute;left:553px;top:333px;height:14px;padding:0 3px 0 1px;background:#f0f0f0;line-height:14px;font-size:11px;color:#000;white-space:nowrap;"><span style="position:relative;top:0.9px">Custom Commands</span></div>
<div style="position:absolute;left:553px;top:495px;height:14px;padding:0 3px 0 1px;background:#f0f0f0;line-height:14px;font-size:11px;color:#000;white-space:nowrap;"><span style="position:relative;top:0.9px">Override Settings</span></div>
<div style="position:absolute;left:37px;top:529px;height:14px;padding:0 3px 0 1px;background:#fff;line-height:14px;font-size:11px;color:#000;white-space:nowrap;"><span style="position:relative;top:0.9px">Jog Speeds</span></div>
<div style="position:absolute;left:351px;top:53px;width:170px;height:56px;border:5px solid #e8192a;box-sizing:border-box;"></div>
</body></html>
